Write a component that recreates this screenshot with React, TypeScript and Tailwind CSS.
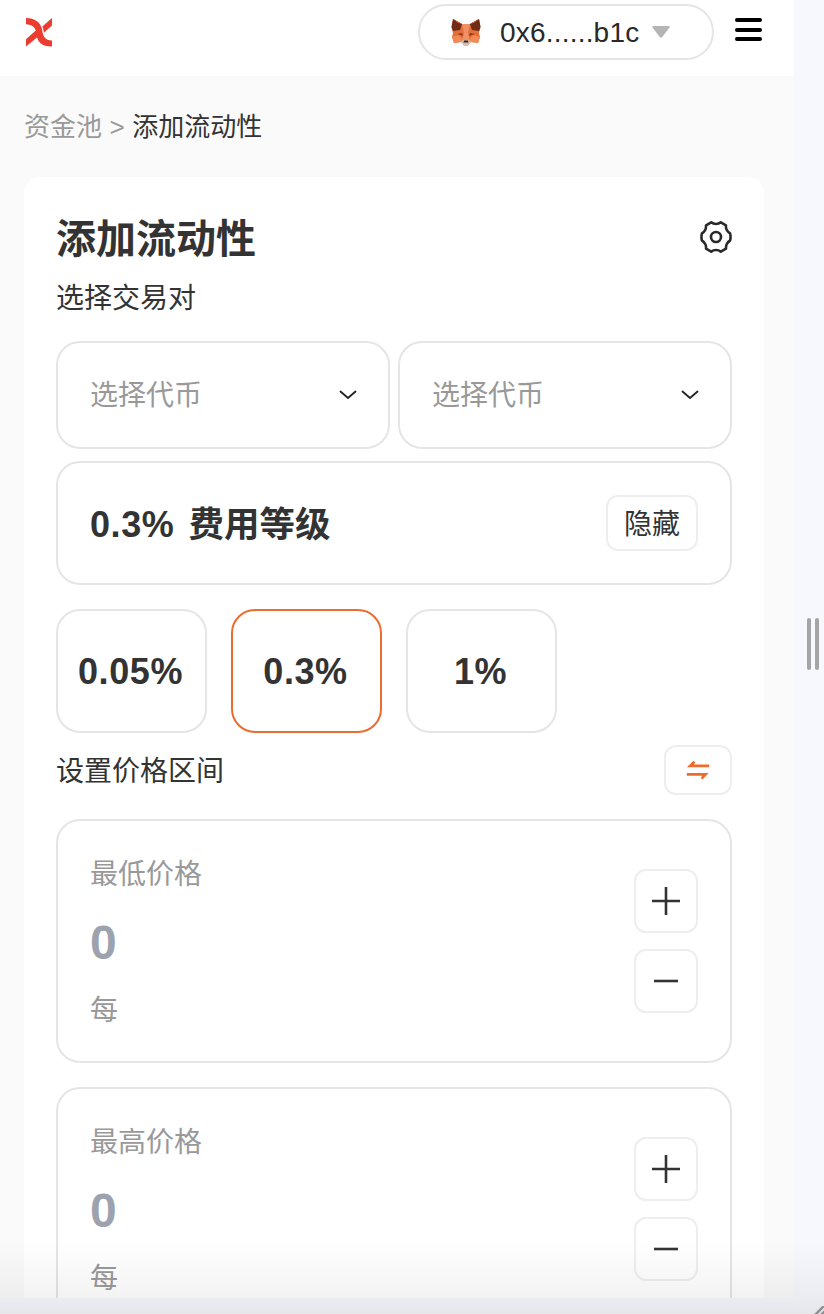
import { ReactNode } from "react";

function Logo() {
  return (
    <svg width="26" height="29" viewBox="0 0 26 29" className="block">
      <path d="M16.4 8.6 26 0V7.6L17.9 14.8Q17.6 11.4 16.4 8.6Z" fill="#ec3b2f" />
      <path
        d="M0 0C8.5 0 14.6 4 16 11.2C16.8 18.6 19.2 22.2 26 22.5V28.6C18 28.8 13 25.8 11 19.6L0 28.5V21.2L9.8 12.4C8 8.3 5.2 6.4 0 6.2Z"
        fill="#ec3b2f"
      />
    </svg>
  );
}

function Fox() {
  return (
    <svg width="30" height="28" viewBox="0 0 30 28" className="mt-0.5 block">
      <path d="M2 0 11 5H19L28 0 29.5 8 28 14 29 18 27 24 20 23 17 26H13L10 23 3 24 1 18 2 14 .5 8Z" fill="#e2703a" />
      <path d="M2 0 11 5 9 11 2 12 .5 8Z M28 0 19 5 21 11 28 12 29.5 8Z" fill="#6f2b16" />
      <path d="M2 0 11 5 7 4Z M28 0 19 5 23 4Z" fill="#d9603a" />
      <path d="M11 5H19L17 14 19 22H11L13 14Z" fill="#f19064" />
      <path d="M1 18 8 16 11 20 10 23 3 24Z M29 18 22 16 19 20 20 23 27 24Z" fill="#f28a56" />
      <path d="M6 15 11 14 12 17Z M24 15 19 14 18 17Z" fill="#96331b" />
      <path d="M10 22 13 21H17L20 22 17 27H13Z" fill="#d5bfb2" />
      <path d="M13 21.5H17L17.5 23.5H12.5Z" fill="#41231c" />
    </svg>
  );
}

function Settings() {
  return (
    <svg width="32" height="34" viewBox="0 0 32 34" fill="none" stroke="#292929" strokeWidth="2.6" strokeLinejoin="round" className="mb-1 block">
      <path d="M11.2 2.3Q13.2 4 16 4T20.8 2.3L26 5.3Q25.6 8.2 27 10.4T30.1 13.5Q31 17 30.1 20.5Q28.2 21.6 27 23.6T26 28.7L20.8 31.7Q18.8 30 16 30T11.2 31.7L6 28.7Q6.4 25.8 5 23.6T1.9 20.5Q1 17 1.9 13.5Q3.8 12.4 5 10.4T6 5.3Z" />
      <circle cx="16" cy="17" r="5" />
    </svg>
  );
}

function TokenSelect() {
  return (
    <button className="flex h-[108px] flex-1 items-center justify-between rounded-3xl border-2 border-[#e5e5e5] pr-[31px] pl-8 text-[28px] text-[#999]">
      <span className="pt-0.5">选择代币</span>
      <svg width="18" height="10" viewBox="0 0 18 10" fill="none" stroke="#222" strokeWidth="1.8" strokeLinecap="round" strokeLinejoin="round">
        <path d="M1.5 1.5 9 8 16.5 1.5" />
      </svg>
    </button>
  );
}

function StepButton({ children }: { children: ReactNode }) {
  return (
    <button className="flex size-16 items-center justify-center rounded-xl border-2 border-[#eee]">
      <svg width="28" height="28" viewBox="0 0 28 28" stroke="#333" strokeWidth="2.6">
        {children}
      </svg>
    </button>
  );
}

function PriceBox({ label }: { label: string }) {
  return (
    <section className="flex h-[244px] shrink-0 items-center justify-between rounded-3xl border-2 border-[#e5e5e5] px-8">
      <div className="flex flex-col pt-1 text-[28px] text-[#999]">
        <span className="h-10 leading-10">{label}</span>
        <span className="my-3 h-[72px] text-[48px] leading-[72px] font-bold text-[#9ca3af]">0</span>
        <span className="h-10 leading-10">每</span>
      </div>
      <div className="flex flex-col gap-4">
        <StepButton>
          <path d="M0 14H28M14 0V28" />
        </StepButton>
        <StepButton>
          <path d="M2 14H26" />
        </StepButton>
      </div>
    </section>
  );
}

const tiers = ["0.05%", "0.3%", "1%"];

export default function App() {
  return (
    <div className="relative flex h-[1314px] w-[824px] flex-col overflow-hidden bg-[#f7f8fd] font-['Liberation_Sans','Noto_Sans_CJK_SC',sans-serif] text-[#333]">
      <div className="flex h-[1298px] shrink-0">
        <div className="flex w-[794px] flex-col overflow-hidden bg-[#fafafa]">
          <header className="flex h-[76px] shrink-0 items-start justify-between bg-white pr-8 pl-[25.5px]">
            <div className="pt-[17.5px]">
              <Logo />
            </div>
            <div className="flex pt-1">
              <button className="flex h-14 w-[296px] items-center rounded-full border-2 border-[#e5e5e5] pl-[31px] text-[28px] text-[#292929]">
                <Fox />
                <span className="ml-[19px] pt-0.5 tracking-[0.2px]">0x6......b1c</span>
                <svg width="18" height="12" viewBox="0 0 18 12" className="ml-[13px]">
                  <path d="M1.5 0H16.5Q18.5 0 17.3 1.8L10.3 11Q9 12.6 7.7 11L.7 1.8Q-.5 0 1.5 0Z" fill="#b5b5b5" />
                </svg>
              </button>
              <button className="mt-3.5 ml-[21px] flex h-[23px] w-[27px] flex-col justify-between">
                <span className="h-1 w-full rounded-full bg-black" />
                <span className="h-1 w-full rounded-full bg-black" />
                <span className="h-1 w-full rounded-full bg-black" />
              </button>
            </div>
          </header>

          <nav className="flex h-[101px] shrink-0 items-center gap-[7.5px] pt-0.5 pl-6 text-[26px]">
            <span className="text-[#999]">资金池</span>
            <span className="text-[#999]">&gt;</span>
            <span>添加流动性</span>
          </nav>

          <main className="mr-[30px] ml-6 flex flex-1 flex-col rounded-t-2xl bg-white px-8 pt-8">
            <div className="flex h-[60px] shrink-0 items-center justify-between">
              <h1 className="text-[40px] leading-[60px] font-bold">添加流动性</h1>
              <Settings />
            </div>
            <h2 className="h-14 shrink-0 text-[28px] leading-[59px]">选择交易对</h2>
            <div className="mt-4 flex gap-2">
              <TokenSelect />
              <TokenSelect />
            </div>
            <div className="mt-3 flex h-[124px] shrink-0 items-center justify-between rounded-3xl border-2 border-[#e5e5e5] px-8">
              <span className="flex gap-[14px] pt-[3px] text-[36px] leading-[54px] font-bold">
                <span className="tracking-[0.6px]">0.3%</span>
                <span className="text-[35.5px]">费用等级</span>
              </span>
              <button className="flex h-14 w-[92px] items-center justify-center rounded-xl border-2 border-[#eee] pt-[3px] text-[28px]">隐藏</button>
            </div>
            <div className="mt-6 flex gap-6">
              {tiers.map((tier) => (
                <button
                  key={tier}
                  className={`h-[124px] w-[151px] rounded-3xl border-2 pt-0.5 pr-0.5 text-[36px] font-bold tracking-[0.6px] ${tier === "0.3%" ? "border-[#ed6b2d]" : "border-[#e5e5e5]"}`}
                >
                  {tier}
                </button>
              ))}
            </div>
            <div className="mt-3 flex h-[50px] shrink-0 items-center justify-between">
              <h2 className="pt-[3px] text-[28px]">设置价格区间</h2>
              <button className="flex h-[50px] w-[68px] items-center justify-center rounded-xl border-2 border-[#eee]">
                <svg width="24" height="20" viewBox="0 0 24 20" fill="#ed6b2d">
                  <path d="M7.5 .8 9.2 2.2 8 4.4H23.2V7.2H.8Z M.8 13H22.8L16.4 19.4 14.8 17.8 16.2 15.8H.8Z" />
                </svg>
              </button>
            </div>
            <div className="mt-6 flex flex-col gap-6">
              <PriceBox label="最低价格" />
              <PriceBox label="最高价格" />
            </div>
          </main>
        </div>
        <aside className="flex w-[30px] items-center justify-end gap-1 pr-[5px] pb-[10px]">
          <span className="h-[52px] w-1 rounded-full bg-[#a5a5a5]" />
          <span className="h-[52px] w-1 rounded-full bg-[#a5a5a5]" />
        </aside>
      </div>
      <footer className="flex h-4 items-end justify-end bg-linear-to-b from-[#ebecf1] to-[#e5e6eb]">
        <svg width="10" height="8" viewBox="0 0 10 8" stroke="#929292" strokeWidth="2.6">
          <path d="M1 9 11 -1M7 9 12 4" />
        </svg>
      </footer>
      <div className="pointer-events-none absolute inset-x-0 bottom-4 h-14 bg-linear-to-b from-transparent to-black/5" />
    </div>
  );
}
